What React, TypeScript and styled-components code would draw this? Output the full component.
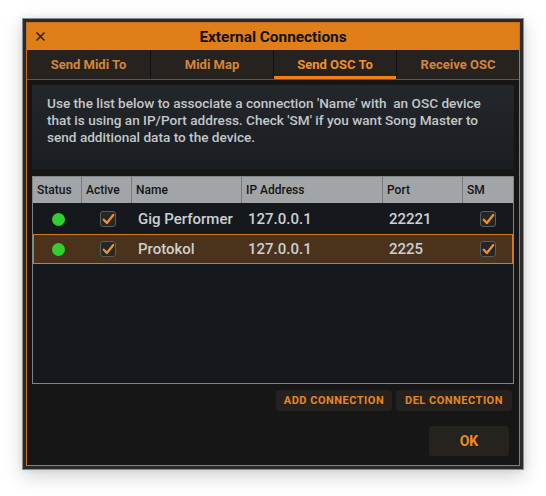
import React from 'react';
import styled, { createGlobalStyle } from 'styled-components';

const GlobalStyle = createGlobalStyle`
  body {
    margin: 0;
    background: #ffffff;
    font-family: Roboto, 'Liberation Sans', sans-serif;
  }
`;

const Page = styled.div`
  width: 546px;
  height: 496px;
  padding: 18px 0 0 22px;
  box-sizing: border-box;
`;

const Window = styled.div`
  width: 502px;
  height: 452px;
  box-sizing: border-box;
  border: 1px solid #8c8c8c;
  background: #2a2a2a;
  padding: 3px;
  box-shadow: 0 6px 18px rgba(0, 0, 0, 0.18), 0 0 6px rgba(0, 0, 0, 0.08);
`;

const Frame = styled.div`
  height: 100%;
  box-sizing: border-box;
  border: 1px solid #c8701e;
  background: #161616;
  display: flex;
  flex-direction: column;
`;

const TitleBar = styled.div`
  height: 27px;
  background: #e07f18;
  display: flex;
  align-items: center;
  position: relative;
  justify-content: center;
`;

const CloseButton = styled.div`
  position: absolute;
  left: 9px;
  top: 9px;
  width: 9px;
  height: 9px;
  display: flex;
`;

const Title = styled.div`
  font-size: 15.4px;
  font-weight: 700;
  color: #111111;
`;

const Tabs = styled.div`
  display: grid;
  grid-template-columns: repeat(4, 1fr);
  height: 29px;
  background: #25221f;
  border-bottom: 1px solid #5a5a5a;
`;

const Tab = styled.div<{ $active?: boolean; $first?: boolean }>`
  display: flex;
  align-items: center;
  justify-content: center;
  font-size: 13px;
  font-weight: 700;
  color: ${(p) => (p.$active ? '#f49026' : '#d5853a')};
  border-left: ${(p) => (p.$first ? 'none' : '1px solid #111')};
  box-shadow: ${(p) => (p.$active ? 'inset 0 -3px 0 #f07f18' : 'none')};
`;

const Body = styled.div`
  flex: 1;
  display: flex;
  flex-direction: column;
  padding: 5px 5px 9px 5px;
`;

const Info = styled.div`
  height: 84px;
  box-sizing: border-box;
  background: linear-gradient(180deg, #23262b 0%, #1a1d21 100%);
  padding: 10px 15px;
  font-size: 13.6px;
  font-weight: 500;
  line-height: 17px;
  color: #c3c7ca;
  white-space: pre-wrap;
`;

const Table = styled.div`
  margin-top: 7px;
  height: 208px;
  box-sizing: border-box;
  border: 1px solid #808487;
  background: #15191d;
  display: flex;
  flex-direction: column;
`;

const cols = '49px 50px 110px 141px 80px 1fr';

const HeaderRow = styled.div`
  display: grid;
  grid-template-columns: ${cols};
  height: 26px;
  background: #a2a5a8;
`;

const HeaderCell = styled.div<{ $last?: boolean }>`
  display: flex;
  align-items: center;
  padding-left: 4px;
  font-size: 12px;
  font-weight: 500;
  color: #141414;
  border-right: ${(p) => (p.$last ? 'none' : '1px solid #77797b')};
`;

const Row = styled.div<{ $selected?: boolean }>`
  display: grid;
  grid-template-columns: ${cols};
  height: 30px;
  box-sizing: border-box;
  margin-top: ${(p) => (p.$selected ? '0' : '1px')};
  background: ${(p) => (p.$selected ? '#4a321b' : 'transparent')};
  border: 1px solid ${(p) => (p.$selected ? '#d27a22' : 'transparent')};
`;

const Cell = styled.div<{ $center?: boolean }>`
  display: flex;
  align-items: center;
  justify-content: ${(p) => (p.$center ? 'center' : 'flex-start')};
  padding-left: ${(p) => (p.$center ? '0' : '5px')};
  font-size: 15px;
  font-weight: 500;
  color: #ccd0d3;
`;

const Dot = styled.div`
  width: 13px;
  height: 13px;
  border-radius: 50%;
  background: #2fcf2f;
`;

const Check = styled.div`
  width: 16px;
  height: 16px;
  box-sizing: border-box;
  border-radius: 3px;
  border: 1px solid #5c5c5c;
  background: #262626;
  display: flex;
  align-items: center;
  justify-content: center;
`;

const ActionRow = styled.div`
  display: flex;
  justify-content: flex-end;
  gap: 4px;
  margin-top: 6px;
  padding-right: 2px;
`;

const SmallButton = styled.div`
  width: 116px;
  height: 21px;
  border-radius: 3px;
  background: #24211e;
  display: flex;
  align-items: center;
  justify-content: center;
  font-size: 11px;
  font-weight: 700;
  letter-spacing: 0.5px;
  color: #e8871f;
`;

const Footer = styled.div`
  margin-top: auto;
  display: flex;
  justify-content: flex-end;
  padding-right: 5px;
`;

const OkButton = styled.div`
  width: 80px;
  height: 30px;
  border-radius: 3px;
  background: #26221e;
  display: flex;
  align-items: center;
  justify-content: center;
  font-size: 14px;
  font-weight: 700;
  color: #ee8a20;
`;

const CheckBox = () => (
  <Check>
    <svg width="13" height="13" viewBox="0 0 12 12">
      <path d="M1.6 6.2 L4.5 9.3 L10.4 1.9" fill="none" stroke="#f7901e" strokeWidth="2.1" strokeLinecap="round" strokeLinejoin="round" />
    </svg>
  </Check>
);

const connections = [
  { name: 'Gig Performer', ip: '127.0.0.1', port: '22221', selected: false },
  { name: 'Protokol', ip: '127.0.0.1', port: '2225', selected: true },
];

const App = () => {
  const tabs = ['Send Midi To', 'Midi Map', 'Send OSC To', 'Receive OSC'];
  const headers = ['Status', 'Active', 'Name', 'IP Address', 'Port', 'SM'];
  return (
    <Page>
      <GlobalStyle />
      <Window>
        <Frame>
          <TitleBar>
            <CloseButton>
              <svg width="9" height="9" viewBox="0 0 9 9">
                <path d="M0.5 0.5 L8.5 8.5 M8.5 0.5 L0.5 8.5" stroke="#1a1a1a" strokeWidth="1.4" />
              </svg>
            </CloseButton>
            <Title>External Connections</Title>
          </TitleBar>
          <Tabs>
            {tabs.map((t, i) => (
              <Tab key={t} $active={i === 2} $first={i === 0}>
                {t}
              </Tab>
            ))}
          </Tabs>
          <Body>
            <Info>
              {"Use the list below to associate a connection 'Name' with  an OSC device\nthat is using an IP/Port address. Check 'SM' if you want Song Master to\nsend additional data to the device."}
            </Info>
            <Table>
              <HeaderRow>
                {headers.map((h, i) => (
                  <HeaderCell key={h} $last={i === headers.length - 1}>
                    {h}
                  </HeaderCell>
                ))}
              </HeaderRow>
              {connections.map((c) => (
                <Row key={c.name} $selected={c.selected}>
                  <Cell $center>
                    <Dot />
                  </Cell>
                  <Cell $center>
                    <CheckBox />
                  </Cell>
                  <Cell>{c.name}</Cell>
                  <Cell>{c.ip}</Cell>
                  <Cell>{c.port}</Cell>
                  <Cell $center>
                    <CheckBox />
                  </Cell>
                </Row>
              ))}
            </Table>
            <ActionRow>
              <SmallButton>ADD CONNECTION</SmallButton>
              <SmallButton>DEL CONNECTION</SmallButton>
            </ActionRow>
            <Footer>
              <OkButton>OK</OkButton>
            </Footer>
          </Body>
        </Frame>
      </Window>
    </Page>
  );
};

export default App;
